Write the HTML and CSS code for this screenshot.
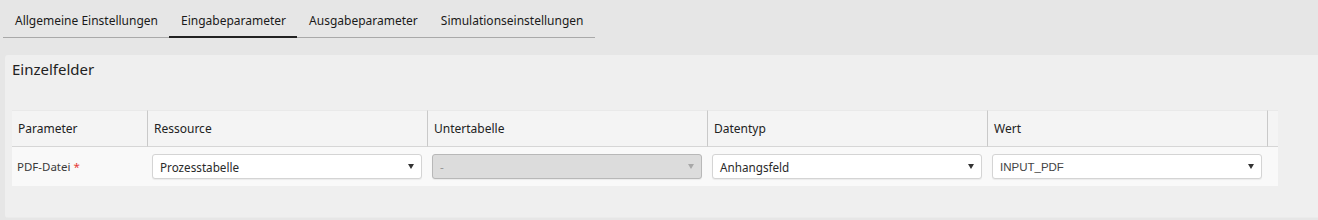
FILE: index.html
```html
<!DOCTYPE html>
<html lang="de">
<head>
<meta charset="utf-8">
<title>Eingabeparameter</title>
<link rel="stylesheet" href="styles.css">
</head>
<body>
<nav class="tabs">
  <div class="tab">Allgemeine Einstellungen</div>
  <div class="tab active">Eingabeparameter</div>
  <div class="tab">Ausgabeparameter</div>
  <div class="tab">Simulationseinstellungen</div>
</nav>
<section class="panel">
  <h2 class="panel-title">Einzelfelder</h2>
  <div class="grid">
    <div class="th">Parameter</div>
    <div class="th">Ressource</div>
    <div class="th">Untertabelle</div>
    <div class="th">Datentyp</div>
    <div class="th">Wert</div>
    <div class="th th-last"></div>

    <div class="td td-label"><span>PDF-Datei <span class="req">*</span></span></div>
    <div class="td"><div class="select"><span class="sel-text">Prozesstabelle</span><span class="caret"></span></div></div>
    <div class="td"><div class="select disabled"><span class="sel-text">-</span><span class="caret"></span></div></div>
    <div class="td"><div class="select"><span class="sel-text">Anhangsfeld</span><span class="caret"></span></div></div>
    <div class="td"><div class="select"><span class="sel-text mono">INPUT_PDF</span><span class="caret"></span></div></div>
    <div class="td"></div>
  </div>
</section>
</body>
</html>
```
FILE: styles.css
```css
html, body {
  margin: 0;
  padding: 0;
}
body {
  background: #e6e6e6;
  font-family: "Noto Sans", "Open Sans", sans-serif;
  color: #333;
  height: 220px;
  overflow: hidden;
}
.tabs {
  display: flex;
  width: fit-content;
  margin-left: 3px;
  border-bottom: 1px solid #a9a9a9;
}
.tab {
  font-size: 12px;
  line-height: 18px;
  padding: 12px 11px 6px 12px;
  border-bottom: 2px solid transparent;
  margin-bottom: -1px;
  color: #1a1a1a;
}
.tab.active {
  border-bottom-color: #222;
}
.panel {
  margin: 17px 0 0 5px;
  height: 158px;
  padding: 4px 0 0 7px;
  background: #efefef;
  border-radius: 3px 0 0 3px;
  border-bottom: 1px solid #ebebeb;
}
.panel-title {
  margin: 0;
  font-size: 15px;
  line-height: 20px;
  font-weight: normal;
  color: #222;
}
.grid {
  margin-top: 31px;
  display: grid;
  grid-template-columns: 136px 280px 280px 280px 280px 10px;
  width: 1266px;
  font-size: 12px;
}
.th {
  background: #f4f4f4;
  height: 35px;
  line-height: 35px;
  padding-left: 6px;
  border-right: 1px solid #c9c9c9;
  border-bottom: 1px solid #d6d6d6;
  border-top: 1px solid #e9e9e9;
  box-sizing: content-box;
  color: #222;
}
.th-last {
  border-right: none;
  padding-left: 0;
}
.td {
  background: #f9f9f9;
  height: 39px;
  display: flex;
  align-items: center;
  padding: 0 5px 0 4px;
}
.td-label {
  padding-left: 5px;
  font-size: 11.5px;
  color: #3a3a3a;
}
.req {
  color: #e53935;
}
.select {
  width: 270px;
  height: 25px;
  box-sizing: border-box;
  border: 1px solid #d4d4d4;
  border-radius: 3px;
  background: #fff;
  box-shadow: 0 1px 1px rgba(0,0,0,0.06);
  display: flex;
  align-items: center;
  justify-content: space-between;
  padding: 0 6px 0 7px;
  font-size: 11.7px;
  color: #2a2a2a;
}
.select.disabled {
  background: #dcdcdc;
  border-color: #b8b8b8;
  color: #999;
}
.sel-text.mono {
  font-family: "Liberation Sans", Arial, sans-serif;
  font-size: 11.5px;
  color: #444;
}
.caret {
  width: 0;
  height: 0;
  border-left: 3px solid transparent;
  border-right: 3px solid transparent;
  border-top: 5px solid #333;
  margin-right: 1px;
}
.select.disabled .caret {
  border-top-color: #a8a8a8;
}
```
